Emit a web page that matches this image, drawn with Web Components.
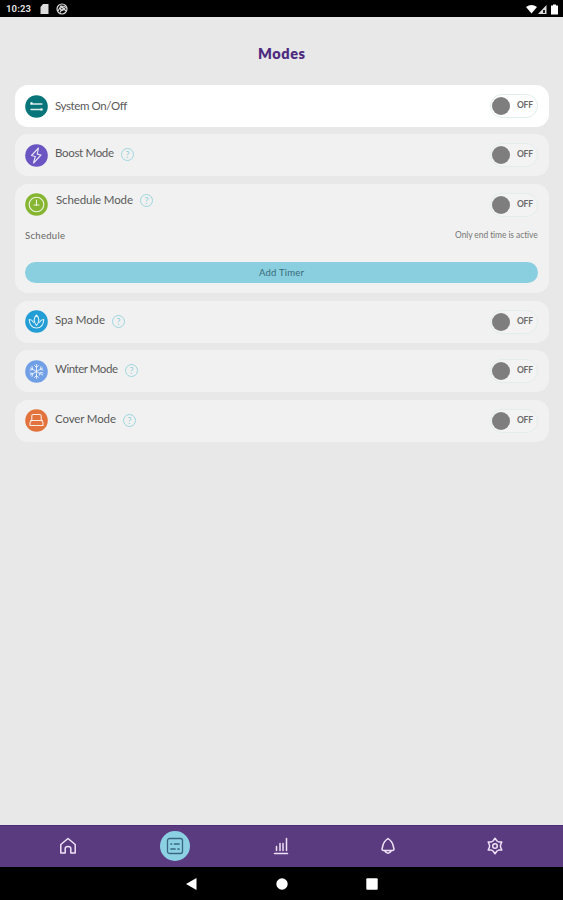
<!DOCTYPE html>
<html lang="en"><head><meta charset="utf-8"><title>Modes</title>
<style>body{margin:0;background:#e8e8e8;font-family:Lato,"Open Sans",sans-serif}</style></head>
<body><modes-app></modes-app>
<script>
const define = (name, html, setup) => {
  const t = document.createElement('template');
  t.innerHTML = html;
  customElements.define(name, class extends HTMLElement {
    connectedCallback() {
      if (this.shadowRoot) return;
      this.attachShadow({mode: 'open'}).append(t.content.cloneNode(true));
      if (setup) setup(this, this.shadowRoot);
    }
  });
};

// Text tracked so that it fills a given width
define('fit-text', `<style>:host{display:block;white-space:nowrap;flex:none}span{display:inline-block}</style><span><slot></slot></span>`,
  (el, root) => {
    const s = root.querySelector('span'), w = +el.getAttribute('width');
    el.style.width = w + 'px';
    const n = el.textContent.length, natural = s.getBoundingClientRect().width;
    s.style.letterSpacing = (w - natural) / (n - 1) + 'px';
  });

define('status-bar', `<style>:host{display:flex;align-items:center;height:17px;box-sizing:border-box;padding:1px 4px 0 6px;background:#000;color:#ddd;font:700 9.5px/16px Roboto,sans-serif}
svg{display:block}.sd{margin-left:9px}.app{margin-left:7px}.right{margin-left:auto}</style>
<fit-text width="25">10:23</fit-text>
<svg class="sd" width="9" height="10" viewBox="0 0 9 10"><path d="M3 0h5.500v10H.5V3z" fill="#ddd"/></svg>
<svg class="app" width="12" height="12" viewBox="0 0 12 12" fill="none" stroke="#ddd" stroke-width="1.200"><circle cx="6" cy="6" r="5"/><path d="M2 8l3-5 5 5M4 9.500l2-3 4-2M5 3l4 .5"/><circle cx="6" cy="6" r="1.500"/></svg>
<svg class="right" width="33" height="11" viewBox="0 0 33 11"><path d="M0 3Q5.500-1 11 3L5.500 9.500z" fill="#fff"/><path d="M20.500 1v9H12z" fill="#ddd"/><path d="M17 6h2v3h-2z" fill="#222"/><path d="M25 1.500h2V.5h3v1h2v9h-7z" fill="#fff"/></svg>`);

const glyphs = {
  system: ['#08757a', '<path d="M6 9h11M6 14.500h11" stroke-width="1.300"/><path d="M5.500 7.300h2v2h-2zM15.500 13.500h2v2h-2z" fill="#fff" stroke="none"/>'],
  boost: ['#6a55c2', '<path d="M13.500 4L6.500 11.500l3.800 1L8.500 19 16 11l-3.800-.9z"/>'],
  schedule: ['#86b532', '<circle cx="11.500" cy="11.500" r="7.300"/><path d="M11.500 7v5.500M9 12h5"/>'],
  spa: ['#229dd5', '<path d="M11.500 15.500C8 11 9 7.500 11.500 5c2.500 2.500 3.500 6 0 10.500zM11.500 18C7 18 4.500 14.500 4.200 9.500c1.800 0 3.300 1 4.300 2.700M11.500 18c4.500 0 7-3.500 7.300-8.500-1.800 0-3.300 1-4.300 2.700"/>'],
  winter: ['#709fe6', '<path d="M11.500 4.500v14M5.400 8l12.200 7M5.400 15l12.200-7M9.500 5.500l2 2 2-2M9.500 17.500l2-2 2 2M5 10l2.800-.6L7 6.600M18 13l-2.800-.6-.8 2.800M5 13l2.800.6-.8 2.800M18 10l-2.800-.6.8-2.800" stroke-width=".9"/>'],
  cover: ['#e3733d', '<path d="M6.800 11V7q0-1.500 1.500-1.500h6.400q1.500 0 1.500 1.500v4M5.500 11.500h12M5 13.500v3h13v-3l-1.500-2M5 13.500l1.500-2"/>']
};
define('mode-icon', `<style>:host{display:block;width:23px;height:23px;flex:none}svg{display:block}</style><svg width="23" height="23" viewBox="0 0 23 23" fill="none" stroke="#fff" stroke-opacity=".85" stroke-width="1.100" stroke-linecap="round" stroke-linejoin="round"><circle cx="11.500" cy="11.500" r="11.300" stroke="none"/><g></g></svg>`,
  (el, root) => {
    const [color, paths] = glyphs[el.getAttribute('name')];
    root.querySelector('circle').setAttribute('fill', color);
    root.querySelector('g').innerHTML = paths;
  });

define('help-mark', `<style>:host{display:block;box-sizing:border-box;width:13px;height:13px;border:1px solid #9cd7dd;border-radius:50%;color:#8fcfd8;font-size:9px;line-height:11px;text-align:center;flex:none}</style>?`);

define('off-toggle', `<style>:host{display:flex;align-items:center;box-sizing:border-box;width:48px;height:24px;padding:0 4px 0 1px;border:1px solid #e2eeec;border-radius:12px;background:var(--track,#f3f3f3);flex:none;justify-content:space-between}
i{width:18px;height:18px;border-radius:50%;background:#7e7e7e}fit-text{font-size:8.500px;line-height:12px;font-weight:700;color:#6a6a6a;margin-bottom:2px}</style><i></i><fit-text width="16">OFF</fit-text>`);

define('mode-card', `<style>:host{display:block;box-sizing:border-box;background:var(--card,#f1f1f1);border-radius:13px;padding:0 11px 0 10px}
.head{display:flex;align-items:center;height:42px}.name{display:flex;align-items:center;gap:7px;margin-left:var(--indent,7px);padding-bottom:var(--lift,4px)}
.name ::slotted(fit-text){font-size:11.500px;line-height:14px;color:#5a5a5a}help-mark{margin-top:var(--drop,3px)}off-toggle{margin-left:auto}
:host([plain]) help-mark{display:none}</style>
<div class="head"><slot name="icon"></slot><div class="name"><slot name="label"></slot><help-mark></help-mark></div><off-toggle></off-toggle></div><slot></slot>`);

define('schedule-panel', `<style>:host{display:block}.row{display:flex;justify-content:space-between;height:18px;align-items:center;color:#666;font-size:9.500px;line-height:14px}
.row fit-text{margin-top:2px}.row .end{font-size:8.500px;color:#777;margin-top:0}button{display:flex;align-items:center;justify-content:center;width:100%;height:21px;margin:18.500px 0 0;padding:0;border:0;border-radius:11px;background:#89cfdf;color:#3a6b79;font:9.500px/14px Lato,sans-serif}</style>
<div class="row"><fit-text width="40">Schedule</fit-text><fit-text class="end" width="83">Only end time is active</fit-text></div><button><fit-text width="45">Add Timer</fit-text></button>`);

define('tab-bar', `<style>:host{display:flex;justify-content:space-around;align-items:center;height:42px;padding:0 15px 2px;box-sizing:border-box;background:#5a3b80;border-top:1px solid #4c2d76}
span{width:30px;height:30px;border-radius:50%;display:grid;place-items:center}.on{background:#8cd0e3}svg{display:block;fill:none;stroke:#f0e2f6;stroke-width:1.500;stroke-linejoin:round;stroke-linecap:round}.on svg{stroke:#396783;stroke-width:1.300}</style>
<span><svg width="18" height="18" viewBox="0 0 18 18"><path d="M1.800 7.500L9 1.500l7.200 6V16h-4.400v-4.500q0-2-2.800-2t-2.800 2V16H1.800z"/></svg></span>
<span class="on"><svg width="18" height="18" viewBox="0 0 18 18"><rect x="1.500" y="1.500" width="15" height="15" rx="2"/><path d="M5 7h.5M8.500 7H13M5 12h4M12 12h1" stroke-width="1.700"/></svg></span>
<span><svg width="16" height="18" viewBox="0 0 16 18"><path d="M1.500 16.500h13M3.500 13.500V9.500M7 13.500V6.500M10 13.500V6.500M13.500 13.500V1.500"/></svg></span>
<span><svg width="16" height="18" viewBox="0 0 16 18"><path d="M8 1.500C5 3.500 3.300 6 2.800 9L2 12q0 1.500 1.500 1.500h9Q14 13.500 14 12l-.8-3C12.700 6 11 3.500 8 1.500zM4.500 13.500q3.500 5.500 7 0"/></svg></span>
<span><svg width="18" height="18" viewBox="0 0 18 18"><path d="M7 4L9 1.300 11 4q.8.600 1.600.900l3.200.100-1.300 3v2l1.300 3-3.200.100Q11.800 13.400 11 14L9 16.700 7 14q-.8-.6-1.600-.9L2.200 13l1.300-3V8L2.200 5l3.200-.1Q6.200 4.600 7 4z"/><circle cx="9" cy="9" r="2.300"/></svg></span>`);

define('system-nav', `<style>:host{display:flex;height:33px;background:#000;align-items:center;justify-content:center;gap:78px}svg{display:block}</style>
<svg width="12" height="12"><path d="M0 6L10.500 0v12z" fill="#fff"/></svg><svg width="12" height="12"><circle cx="6" cy="6" r="5.700" fill="#fff"/></svg><svg width="12" height="12"><rect x=".3" y=".3" width="11.400" height="11.400" rx="1" fill="#fff"/></svg>`);

define('modes-app', `<style>:host{display:flex;flex-direction:column;height:900px}
h1{display:flex;justify-content:center;margin:0;height:68px;padding-top:27px;box-sizing:border-box;color:#4f2b80;font:800 14.500px/20px Lato,sans-serif}
main{flex:1;display:flex;flex-direction:column;gap:7.400px;padding:0 14px 0 15px}.schedule{height:109.700px;--lift:9px;--drop:0px;--indent:8px}.white{--card:#fff;--track:#fff;--lift:1px}</style>
<status-bar></status-bar><h1><fit-text width="47">Modes</fit-text></h1>
<main>
<mode-card class="white" plain><mode-icon slot="icon" name="system"></mode-icon><fit-text slot="label" width="72">System On/Off</fit-text></mode-card>
<mode-card><mode-icon slot="icon" name="boost"></mode-icon><fit-text slot="label" width="59">Boost Mode</fit-text></mode-card>
<mode-card class="schedule"><mode-icon slot="icon" name="schedule"></mode-icon><fit-text slot="label" width="77">Schedule Mode</fit-text><schedule-panel></schedule-panel></mode-card>
<mode-card><mode-icon slot="icon" name="spa"></mode-icon><fit-text slot="label" width="50">Spa Mode</fit-text></mode-card>
<mode-card><mode-icon slot="icon" name="winter"></mode-icon><fit-text slot="label" width="63">Winter Mode</fit-text></mode-card>
<mode-card><mode-icon slot="icon" name="cover"></mode-icon><fit-text slot="label" width="61">Cover Mode</fit-text></mode-card>
</main><tab-bar></tab-bar><system-nav></system-nav>`);
</script></body></html>
